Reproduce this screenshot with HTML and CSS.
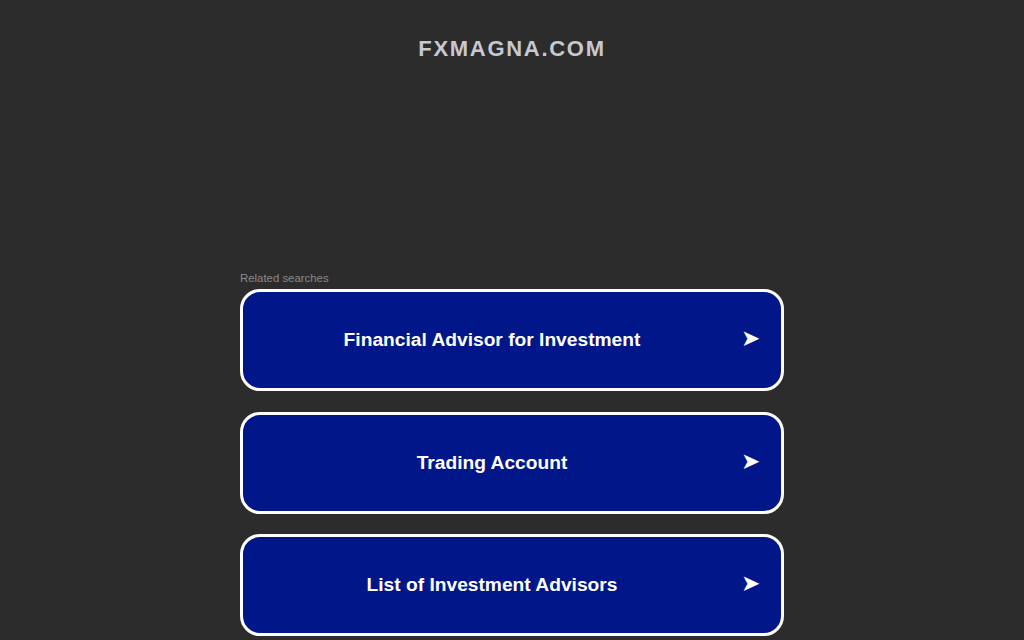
FILE: index.html
```html
<!DOCTYPE html>
<html>
<head>
<meta charset="utf-8">
<link rel="stylesheet" href="styles.css">
</head>
<body>
<div class="page">
  <h1 class="domain">FXMAGNA.COM</h1>
  <div class="related">
    <div class="label">Related searches</div>
    <a class="item" href="#"><span class="text">Financial Advisor for Investment</span><span class="arrow">➤</span></a>
    <a class="item" href="#"><span class="text">Trading Account</span><span class="arrow">➤</span></a>
    <a class="item" href="#"><span class="text">List of Investment Advisors</span><span class="arrow">➤</span></a>
  </div>
</div>
</body>
</html>
```
FILE: styles.css
```css
html, body {
  margin: 0;
  padding: 0;
  background: #2c2c2c;
  font-family: "Liberation Sans", Arial, sans-serif;
  overflow: hidden;
}
.page {
  display: flex;
  flex-direction: column;
  align-items: center;
}
.domain {
  margin: 36px 0 0;
  font-size: 22px;
  line-height: 26px;
  font-weight: bold;
  letter-spacing: 1.7px;
  color: #c8c8d0;
}
.related {
  margin-top: 210px;
  width: 544px;
  display: flex;
  flex-direction: column;
}
.label {
  font-size: 11.4px;
  line-height: 13px;
  color: #8a8a8a;
  margin-bottom: 4px;
}
.item {
  box-sizing: border-box;
  height: 102px;
  border: 3px solid #fff;
  border-radius: 20px;
  background: #011689;
  color: #fff;
  text-decoration: none;
  display: flex;
  align-items: center;
  margin-bottom: 20.5px;
  padding: 0 22px 0 0;
}
.text {
  flex: 1;
  text-align: center;
  font-size: 19.2px;
  font-weight: bold;
}
.arrow {
  font-family: "DejaVu Sans", sans-serif;
  font-size: 23px;
  line-height: 1;
  width: 18px;
  margin-bottom: 3px;
}
```
